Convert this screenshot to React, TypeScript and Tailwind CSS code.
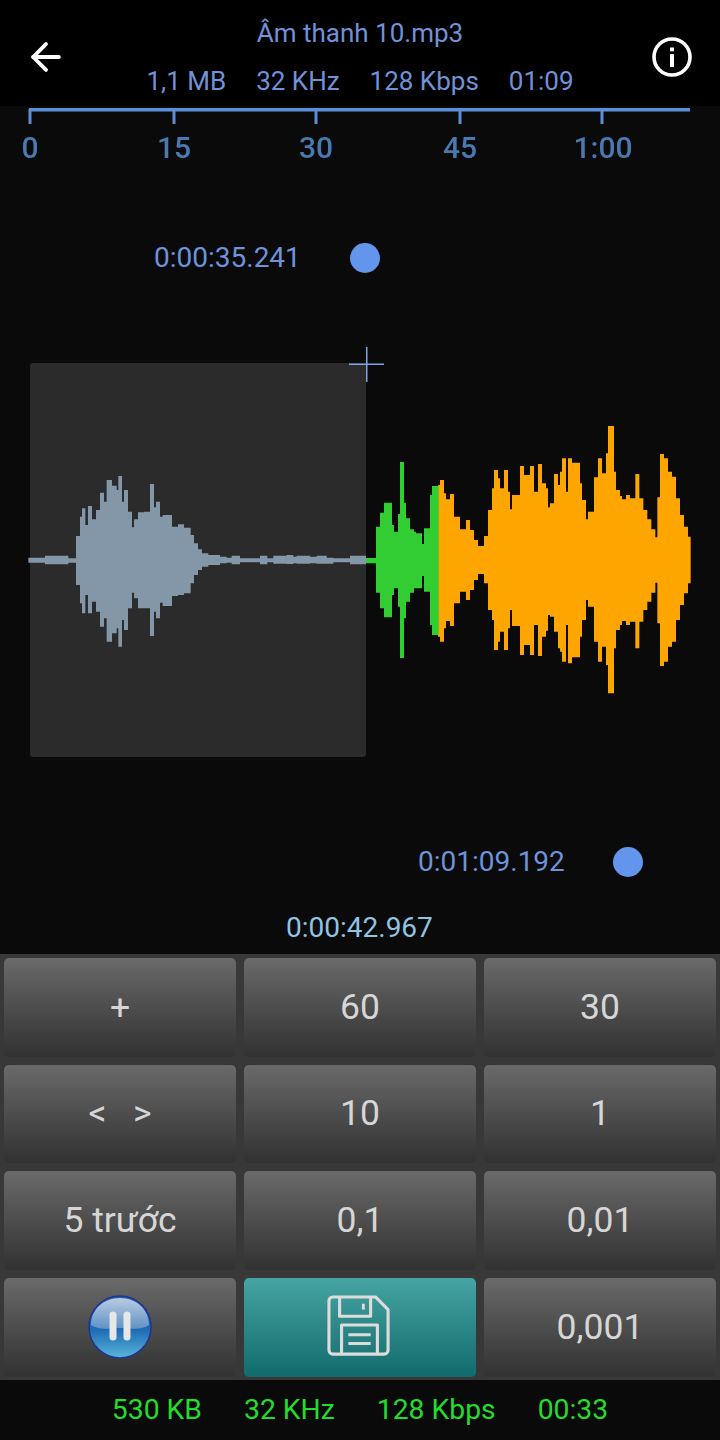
import React from 'react';
import { ArrowLeft } from 'lucide-react';

type Step = [number, number, number];

// [start x, top, bottom], in 3x crop coordinates so the steps stay readable
const grayWave: Step[] = [
  [85, 413, 428], [135, 407, 433], [205, 415, 428], [228, 348, 495], [240, 290, 550], [246, 265, 580],
  [256, 315, 525], [264, 258, 580], [276, 298, 545], [288, 270, 575], [300, 218, 620], [312, 245, 595],
  [320, 180, 665], [336, 197, 640], [350, 210, 625], [355, 168, 680], [366, 245, 600], [372, 210, 630],
  [384, 275, 565], [396, 322, 518], [402, 298, 535], [414, 277, 565], [432, 275, 565], [450, 192, 648],
  [462, 262, 575], [468, 245, 595], [480, 290, 548], [488, 285, 558], [516, 320, 528], [534, 313, 525],
  [552, 323, 520], [572, 345, 490], [582, 370, 465], [594, 388, 450], [606, 400, 440], [625, 405, 435],
  [660, 410, 430], [680, 413, 428], [695, 407, 433], [720, 415, 427], [780, 407, 433], [802, 415, 427],
  [820, 407, 431], [860, 405, 432], [880, 410, 430], [890, 407, 431], [930, 410, 430], [950, 407, 431],
  [980, 413, 431], [1000, 415, 427], [1050, 407, 433], [1098, 407, 433],
];

const greenWave: Step[] = [
  [18, 414, 430], [48, 320, 518], [60, 278, 565], [72, 248, 592], [96, 315, 525], [102, 335, 505],
  [114, 282, 560], [120, 126, 714], [132, 248, 595], [138, 295, 545], [150, 328, 518], [162, 335, 505],
  [168, 340, 505], [186, 372, 468], [192, 325, 515], [210, 225, 615], [216, 198, 645], [236, 198, 645],
];

const orangeWave: Step[] = [
  [234, 195, 650], [240, 180, 665], [252, 220, 625], [258, 238, 603], [270, 222, 618], [282, 290, 550],
  [300, 328, 515], [318, 300, 540], [330, 330, 510], [342, 360, 480], [354, 378, 462], [372, 348, 490],
  [384, 270, 570], [396, 205, 600], [402, 150, 690], [414, 175, 665], [420, 205, 635], [432, 150, 690],
  [444, 215, 625], [450, 268, 570], [456, 225, 618], [480, 138, 705], [492, 165, 675], [510, 138, 705],
  [522, 215, 615], [534, 132, 708], [546, 190, 650], [558, 205, 632], [564, 262, 585], [570, 250, 590],
  [582, 162, 635], [594, 195, 685], [600, 155, 695], [606, 115, 725], [618, 215, 615], [624, 115, 730],
  [636, 128, 712], [660, 190, 650], [666, 240, 600], [678, 298, 540], [684, 275, 560], [702, 172, 665],
  [714, 115, 725], [726, 160, 680], [738, 100, 735], [744, 18, 820], [762, 155, 685], [768, 210, 630],
  [780, 228, 615], [786, 238, 603], [798, 225, 615], [810, 235, 605], [826, 162, 685], [838, 235, 605],
  [850, 270, 570], [862, 298, 545], [874, 328, 518], [886, 352, 488], [892, 232, 610], [900, 102, 738],
  [912, 115, 725], [924, 155, 680], [936, 170, 665], [948, 235, 600], [960, 285, 555], [972, 320, 520],
  [984, 350, 490], [992, 350, 490],
];

function wavePath(steps: Step[]) {
  let top = '';
  let bottom = '';
  steps.forEach(([x, t, b], i) => {
    const next = i < steps.length - 1 ? steps[i + 1][0] : x;
    top += `${i === 0 ? 'M' : 'L'}${x} ${t}L${next} ${t}`;
    bottom = `L${next} ${b}L${x} ${b}` + bottom;
  });
  return top + bottom + 'Z';
}

const ticks = [
  { x: 30, label: '0' },
  { x: 174, label: '15' },
  { x: 316, label: '30' },
  { x: 460, label: '45' },
  { x: 602, label: '1:00' },
];

function InfoIcon() {
  return (
    <svg width="42" height="42" viewBox="0 0 42 42" fill="none">
      <circle cx="21" cy="21" r="18" stroke="white" strokeWidth="3.6" />
      <rect x="19" y="18" width="4" height="13" fill="white" />
      <rect x="19" y="11.5" width="4" height="3.8" fill="white" />
    </svg>
  );
}

function PauseIcon() {
  return (
    <svg width="64" height="64" viewBox="0 0 64 64">
      <defs>
        <linearGradient id="pauseBase" x1="0" y1="0" x2="0" y2="1">
          <stop offset="0" stopColor="#1d5fa8" />
          <stop offset="0.55" stopColor="#1f6cb5" />
          <stop offset="1" stopColor="#58b6da" />
        </linearGradient>
        <linearGradient id="pauseGloss" x1="0" y1="0" x2="0" y2="1">
          <stop offset="0" stopColor="#b9cbe0" />
          <stop offset="1" stopColor="#5f93c6" />
        </linearGradient>
      </defs>
      <circle cx="32" cy="32" r="31" fill="url(#pauseBase)" stroke="#22348c" strokeWidth="1.6" />
      <path d="M3 30C3 14 16 3 32 3s29 11 29 27C52 36 42 33 32 33S12 36 3 30Z" fill="url(#pauseGloss)" />
      <rect x="21.5" y="16.5" width="7" height="29" rx="3.5" fill="#e6e6e6" />
      <rect x="35.5" y="16.5" width="7" height="29" rx="3.5" fill="#e6e6e6" />
    </svg>
  );
}

function SaveIcon() {
  return (
    <svg className="-translate-y-px -translate-x-px" width="64" height="62" viewBox="0 0 66 64" fill="none" stroke="#dcdcdc" strokeWidth="3.2" strokeLinejoin="round">
      <path d="M6 2H50L63 15V57A4 4 0 0 1 59 61H6A4 4 0 0 1 2 57V6A4 4 0 0 1 6 2Z" />
      <path d="M13 2V22H45V2" />
      <path d="M15 61V31H52V61" />
      <path d="M22 41H45M22 50H45" />
      <rect x="36" y="9" width="3" height="6" fill="#dcdcdc" stroke="none" />
    </svg>
  );
}

function KeyButton({ children, teal }: { children: React.ReactNode; teal?: boolean }) {
  return (
    <button
      className={
        teal
          ? 'flex items-center justify-center rounded-[5px] bg-gradient-to-b from-[#45a5a2] to-[#0f6b6d]'
          : 'flex items-center justify-center rounded-[5px] bg-gradient-to-b from-[#6a6a6a] to-[#323232] text-[35.5px] text-[#d6d6d6]'
      }
    >
      {children}
    </button>
  );
}

export default function App() {
  return (
    <div className="flex h-[1440px] w-[720px] flex-col overflow-hidden bg-[#0a0a0a] font-['Roboto',sans-serif]">
      {/* Header */}
      <div className="relative flex h-[106px] flex-col items-center bg-black text-[26px] text-[#6f92d8]">
        <div className="mt-[17px] leading-[32px]">Âm thanh 10.mp3</div>
        <div className="mt-[16px] flex gap-[30px] leading-[32px]">
          <span>1,1 MB</span>
          <span>32 KHz</span>
          <span>128 Kbps</span>
          <span>01:09</span>
        </div>
        <ArrowLeft className="absolute left-[24px] top-[35px] text-white" size={44} strokeWidth={2.1} />
        <div className="absolute left-[651px] top-[36px]">
          <InfoIcon />
        </div>
      </div>

      {/* Editing canvas */}
      <div className="relative flex-1">
        <svg className="absolute left-0 top-0" width="720" height="30">
          <rect x="29" y="2" width="661" height="3.5" fill="#5d8fd6" />
          {ticks.map((t) => (
            <rect key={t.x} x={t.x - 1.5} y="3" width="3" height="15" fill="#5d8fd6" />
          ))}
        </svg>
        {ticks.map((t) => (
          <span
            key={t.x}
            className="absolute top-[22px] -translate-x-1/2 text-[30px] font-medium leading-[40px] text-[#4a78b0] blur-[0.6px]"
            style={{ left: t.x === 602 ? 603 : t.x }}
          >
            {t.label}
          </span>
        ))}

        <span className="absolute left-[154px] top-[136px] text-[28px] leading-[32px] text-[#6f92d8]">0:00:35.241</span>
        <div className="absolute left-[350px] top-[137px] h-[30px] w-[30px] rounded-full bg-[#6495ed]" />

        <div className="absolute left-[30px] top-[257px] h-[394px] w-[336px] rounded-[3px] bg-[#2b2b2b]" />

        <svg className="absolute left-[348px] top-[240px]" width="36" height="36">
          <rect x="1" y="17.5" width="35" height="1.5" fill="#7ea2e8" />
          <rect x="18" y="1" width="1.5" height="35" fill="#7ea2e8" />
        </svg>

        <svg className="absolute left-0 top-[314px] blur-[0.4px]" width="370" height="240" viewBox="0 0 1110 720">
          <path d={wavePath(grayWave)} fill="#8497a8" />
        </svg>
        <svg className="absolute left-[360px] top-[314px] blur-[0.4px]" width="350" height="280" viewBox="0 0 1050 840">
          <path d={wavePath(orangeWave)} fill="#ffa500" />
          <path d={wavePath(greenWave)} fill="#32cd32" />
        </svg>

        <span className="absolute left-[418px] top-[740px] text-[28px] leading-[32px] text-[#6f92d8]">0:01:09.192</span>
        <div className="absolute left-[613px] top-[741px] h-[30px] w-[30px] rounded-full bg-[#6495ed]" />

        <span className="absolute left-[286px] top-[806px] text-[28px] leading-[32px] text-[#8fc4e4]">0:00:42.967</span>
      </div>

      {/* Keypad */}
      <div className="grid h-[426px] grid-cols-[232px_232px_232px] grid-rows-[repeat(4,98.7px)] gap-x-2 gap-y-2 bg-[#383838] px-[4px] pt-[4px]">
        <KeyButton>+</KeyButton>
        <KeyButton>60</KeyButton>
        <KeyButton>30</KeyButton>
        <KeyButton>&lt;&nbsp;&nbsp;&nbsp;&gt;</KeyButton>
        <KeyButton>10</KeyButton>
        <KeyButton>1</KeyButton>
        <KeyButton>5 trước</KeyButton>
        <KeyButton>0,1</KeyButton>
        <KeyButton>0,01</KeyButton>
        <KeyButton>
          <PauseIcon />
        </KeyButton>
        <KeyButton teal>
          <SaveIcon />
        </KeyButton>
        <KeyButton>0,001</KeyButton>
      </div>

      {/* Output info */}
      <div className="flex h-[60px] items-center justify-center gap-[42px] text-[28.3px] text-[#22dd2c]">
        <span>530 KB</span>
        <span>32 KHz</span>
        <span>128 Kbps</span>
        <span>00:33</span>
      </div>
    </div>
  );
}
